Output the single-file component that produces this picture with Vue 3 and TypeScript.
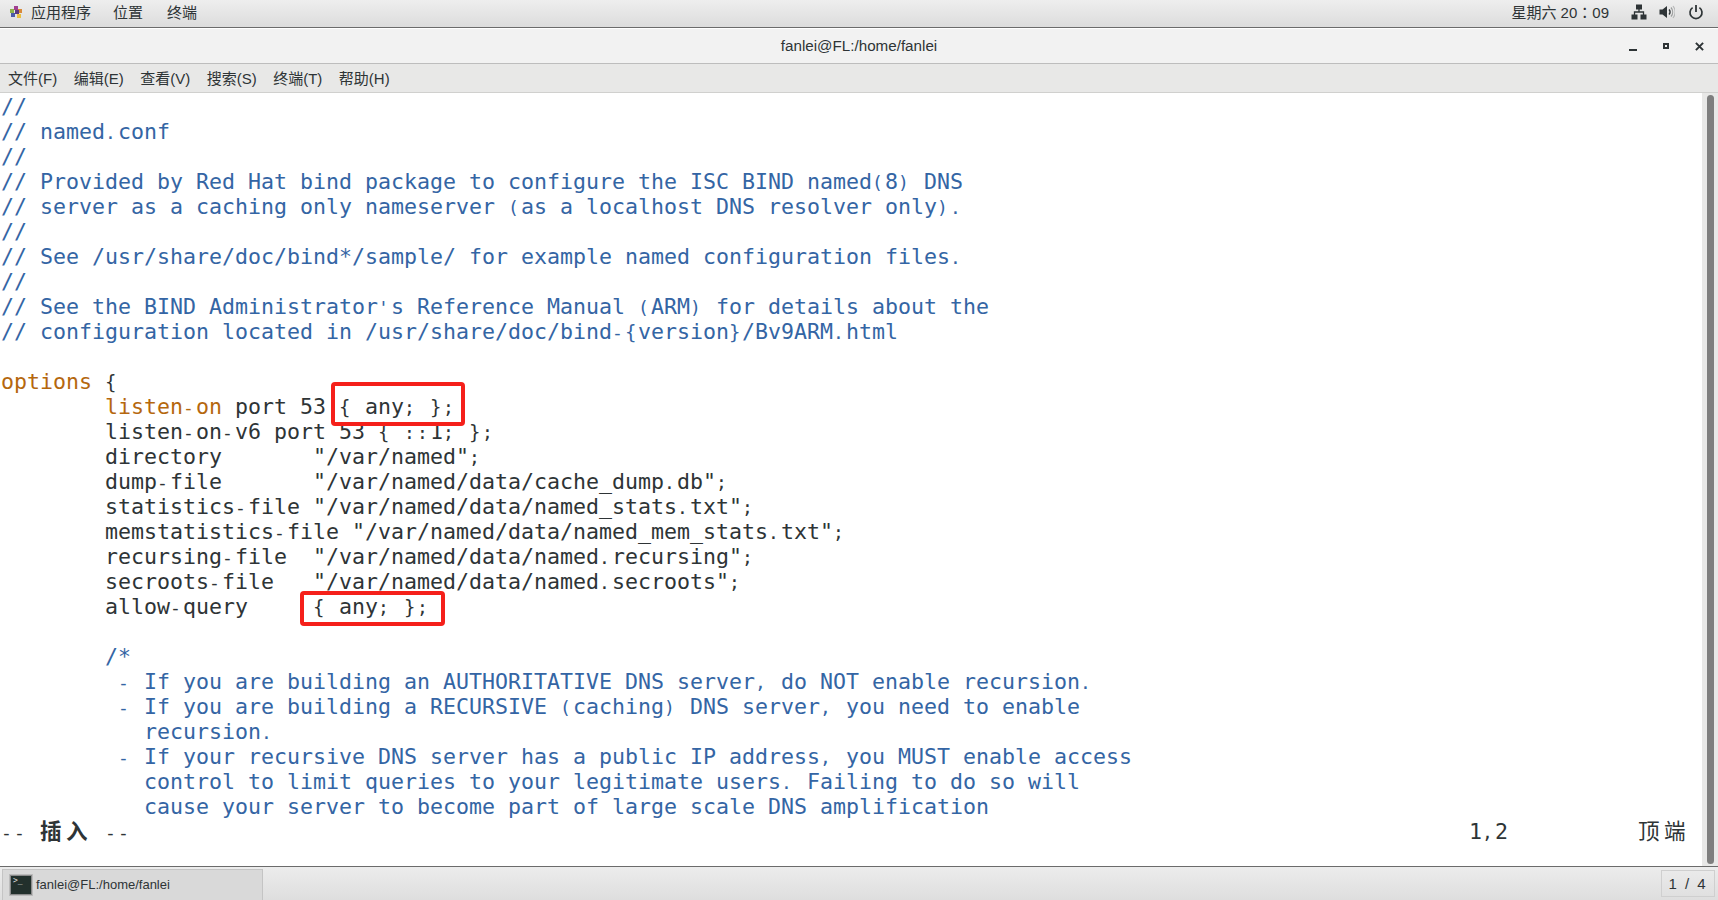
<script setup lang="ts">
type Seg = { t: string; c?: string };
type Run = { t: string; p: string };
const B = "b";
const O = "o";
const rows: Seg[][] = [
  [{ t: "//", c: B }],
  [{ t: "// named.conf", c: B }],
  [{ t: "//", c: B }],
  [{ t: "// Provided by Red Hat bind package to configure the ISC BIND named(8) DNS", c: B }],
  [{ t: "// server as a caching only nameserver (as a localhost DNS resolver only).", c: B }],
  [{ t: "//", c: B }],
  [{ t: "// See /usr/share/doc/bind*/sample/ for example named configuration files.", c: B }],
  [{ t: "//", c: B }],
  [{ t: "// See the BIND Administrator's Reference Manual (ARM) for details about the", c: B }],
  [{ t: "// configuration located in /usr/share/doc/bind-{version}/Bv9ARM.html", c: B }],
  [{ t: " " }],
  [{ t: "options", c: O }, { t: " {" }],
  [{ t: "        " }, { t: "listen-on", c: O }, { t: " port 53 { any; };" }],
  [{ t: "        listen-on-v6 port 53 { ::1; };" }],
  [{ t: "        directory       \"/var/named\";" }],
  [{ t: "        dump-file       \"/var/named/data/cache_dump.db\";" }],
  [{ t: "        statistics-file \"/var/named/data/named_stats.txt\";" }],
  [{ t: "        memstatistics-file \"/var/named/data/named_mem_stats.txt\";" }],
  [{ t: "        recursing-file  \"/var/named/data/named.recursing\";" }],
  [{ t: "        secroots-file   \"/var/named/data/named.secroots\";" }],
  [{ t: "        allow-query     { any; };" }],
  [{ t: " " }],
  [{ t: "        /*", c: B }],
  [{ t: "         - If you are building an AUTHORITATIVE DNS server, do NOT enable recursion.", c: B }],
  [{ t: "         - If you are building a RECURSIVE (caching) DNS server, you need to enable", c: B }],
  [{ t: "           recursion.", c: B }],
  [{ t: "         - If your recursive DNS server has a public IP address, you MUST enable access", c: B }],
  [{ t: "           control to limit queries to your legitimate users. Failing to do so will", c: B }],
  [{ t: "           cause your server to become part of large scale DNS amplification", c: B }],
];
const menus = ["文件(F)", "编辑(E)", "查看(V)", "搜索(S)", "终端(T)", "帮助(H)"];

// The terminal draws punctuation from a smaller fallback face, left-aligned in its cell.
function runs(text: string): Run[] {
  const out: Run[] = [];
  for (const part of text.split(/([.,\-;:'(){}])/)) {
    if (!part) continue;
    if (part === "{" || part === "}") out.push({ t: part, p: "p brace" });
    else if (/^[.,\-;:'()]$/.test(part)) out.push({ t: part, p: "p" });
    else out.push({ t: part, p: "" });
  }
  return out;
}
</script>

<template>
  <div class="desktop">
    <header class="panel">
      <div class="panel-left">
        <svg class="logo" viewBox="0 0 14 14" width="14" height="14">
          <rect x="1" y="4" width="4" height="4" fill="#8db24a" />
          <rect x="5" y="1" width="4" height="4" fill="#a0408f" />
          <rect x="9" y="4" width="4" height="4" fill="#d98a3a" />
          <rect x="2" y="8" width="4" height="4" fill="#4a5aa8" />
          <rect x="6" y="5" width="4" height="4" fill="#5a3a80" />
          <rect x="8" y="9" width="4" height="4" fill="#e8c040" />
        </svg>
        <span class="apps">应用程序</span>
        <span class="places">位置</span>
        <span>终端</span>
      </div>
      <div class="panel-right">
        <span class="clock">星期六 20：09</span>
        <svg class="net" viewBox="0 0 16 16" width="16" height="16">
          <rect x="5" y="0.5" width="6" height="5" fill="#2e3436" />
          <rect x="0.5" y="10.5" width="6" height="5" fill="#2e3436" />
          <rect x="9.5" y="10.5" width="6" height="5" fill="#2e3436" />
          <path d="M8 5v3M3.5 11V8h9v3" fill="none" stroke="#2e3436" stroke-width="1.3" />
        </svg>
        <svg class="vol" viewBox="0 0 16 16" width="16" height="16">
          <path d="M0.5 5.5h3L8 2v12L3.5 10.5h-3z" fill="#2e3436" />
          <path d="M10 5.5a3.5 3.5 0 0 1 0 5" fill="none" stroke="#2e3436" stroke-width="1.4" />
          <path d="M12 3.5a7 7 0 0 1 0 9" fill="none" stroke="#9a9c9c" stroke-width="1.2" />
          <path d="M14 2a9.5 9.5 0 0 1 0 12" fill="none" stroke="#b5b7b7" stroke-width="1.1" />
        </svg>
        <svg class="power" viewBox="0 0 16 16" width="16" height="16">
          <path d="M8 1v7" stroke="#2e3436" stroke-width="1.8" fill="none" />
          <path d="M4.6 3.6a6 6 0 1 0 6.8 0" stroke="#2e3436" stroke-width="1.7" fill="none" />
        </svg>
      </div>
    </header>

    <div class="titlebar">
      <span class="title">fanlei@FL:/home/fanlei</span>
      <div class="wm">
        <span class="min"></span>
        <span class="max"></span>
        <svg viewBox="0 0 10 10" width="9" height="9">
          <path d="M1 1l8 8M9 1l-8 8" stroke="#2e3436" stroke-width="2.2" fill="none" />
        </svg>
      </div>
    </div>

    <nav class="menubar">
      <span v-for="m in menus" :key="m">{{ m }}</span>
    </nav>

    <main class="term">
      <div class="screen">
        <div v-for="(r, i) in rows" :key="i" class="row">
          <span v-for="(s, j) in r" :key="j" :class="s.c"><span v-for="(u, k) in runs(s.t)" :key="k" :class="u.p">{{ u.t }}</span></span>
        </div>
        <div class="row status">
          <span class="mode"><span class="p">-</span><span class="p">-</span> <b>插入</b> <span class="p">-</span><span class="p">-</span></span>
          <span class="pos">1<span class="p">,</span>2</span>
          <span class="top">顶端</span>
        </div>
        <div class="mark mark-a"></div>
        <div class="mark mark-b"></div>
      </div>
      <div class="scrollbar"><div class="thumb"></div></div>
    </main>

    <footer class="taskbar">
      <div class="task">
        <span class="tico"><span class="tprompt">&gt;_</span></span>
        <span class="tasklabel">fanlei@FL:/home/fanlei</span>
      </div>
      <div class="pager">1 / 4</div>
    </footer>
  </div>
</template>

<style scoped>
.desktop {
  width: 1718px;
  height: 900px;
  display: flex;
  flex-direction: column;
  overflow: hidden;
  background: #fff;
  color: #2e3436;
  font-family: "Liberation Sans", "Noto Sans CJK SC", sans-serif;
}
.panel {
  height: 28px;
  flex: none;
  box-sizing: border-box;
  display: flex;
  justify-content: space-between;
  align-items: center;
  background: linear-gradient(#eeeeee, #dcdcdc);
  border-bottom: 1px solid #6b6b6b;
  font-size: 15px;
  padding-bottom: 4px;
}
.panel-left {
  display: flex;
  align-items: center;
  padding-left: 9px;
}
.logo { margin-right: 8px; }
.apps { margin-right: 22px; }
.places { margin-right: 24px; }
.panel-right {
  display: flex;
  align-items: center;
  padding-right: 14px;
}
.clock {
  margin-right: 22px;
  font-family: "Liberation Sans", "Noto Sans CJK TC", sans-serif;
}
.net { margin-right: 12px; }
.vol { margin-right: 13px; }
.titlebar {
  height: 36px;
  flex: none;
  box-sizing: border-box;
  position: relative;
  display: flex;
  align-items: center;
  justify-content: center;
  padding-bottom: 2px;
  background: #f2f2f2;
  border-top: 1px solid #fff;
  border-bottom: 1px solid #bdbdbd;
  font-size: 15.2px;
}
.wm {
  position: absolute;
  right: 14px;
  top: 0;
  height: 100%;
  display: flex;
  align-items: center;
  gap: 26px;
}
.min { width: 8px; height: 2px; background: #2e3436; margin-top: 7px; }
.max { width: 2px; height: 2px; border: 2px solid #2e3436; }
.menubar {
  height: 29px;
  flex: none;
  box-sizing: border-box;
  display: flex;
  align-items: center;
  gap: 16.5px;
  padding: 0 0 2px 8px;
  background: #e8e8e7;
  border-bottom: 1px solid #d0d0ce;
  font-size: 15px;
}
.term {
  flex: 1;
  min-height: 0;
  position: relative;
  background: #fff;
  display: flex;
}
.screen {
  flex: 1;
  position: relative;
  padding: 1px 0 0 1px;
  font-family: "DejaVu Sans Mono", "Noto Sans CJK SC", monospace;
  font-size: 21.6px;
  line-height: 25px;
  color: #2e3436;
}
.row { height: 25px; white-space: pre; }
.b { color: #3465a4; }
.o { color: #b5670e; }
.p {
  display: inline-block;
  width: 13.004px;
  font-size: 18px;
  text-align: left;
}
.brace { font-size: 19px; }
.status {
  display: flex;
  position: relative;
}
.mode { width: 1468px; }
.mode b { font-weight: 700; letter-spacing: 4.4px; }
.pos { width: 169px; }
.top { letter-spacing: 4.4px; }
.mark {
  position: absolute;
  border: 4px solid #f5201a;
  border-radius: 4px;
  box-sizing: border-box;
}
.mark-a { left: 331px; top: 289px; width: 134px; height: 44px; }
.mark-b { left: 300px; top: 498px; width: 145px; height: 35px; }
.scrollbar {
  width: 16px;
  flex: none;
  background: #e8e8e7;
  display: flex;
  justify-content: center;
  padding: 2px 0;
  box-sizing: border-box;
}
.thumb { width: 7px; border-radius: 4px; background: #7e7e7e; }
.taskbar {
  height: 34px;
  flex: none;
  box-sizing: border-box;
  display: flex;
  justify-content: space-between;
  background: linear-gradient(#ececec, #dedede);
  border-top: 1px solid #6b6b6b;
  padding: 2px 3px 0 2px;
  font-size: 13px;
}
.task {
  width: 261px;
  display: flex;
  align-items: center;
  gap: 4px;
  padding-left: 7px;
  background: #d9d9d9;
  border: 1px solid #c4c4c4;
  border-bottom: none;
  box-sizing: border-box;
}
.tasklabel { padding-bottom: 2px; }
.tico {
  width: 20px;
  height: 18px;
  background: #22302c;
  border: 1px solid #8a8a8a;
  box-shadow: 0 0 0 1px #bbb;
  display: block;
  font: 8px/10px "DejaVu Sans Mono", monospace;
  color: #d8d8d8;
  overflow: hidden;
}
.tprompt { padding-left: 2px; }
.pager {
  width: 54px;
  height: 27px;
  margin-top: 1px;
  border: 1px solid #cfcfcf;
  box-sizing: border-box;
  display: flex;
  align-items: center;
  justify-content: center;
  letter-spacing: 2px;
  font-size: 15px;
}
</style>

<style>
html, body { margin: 0; padding: 0; }
</style>
